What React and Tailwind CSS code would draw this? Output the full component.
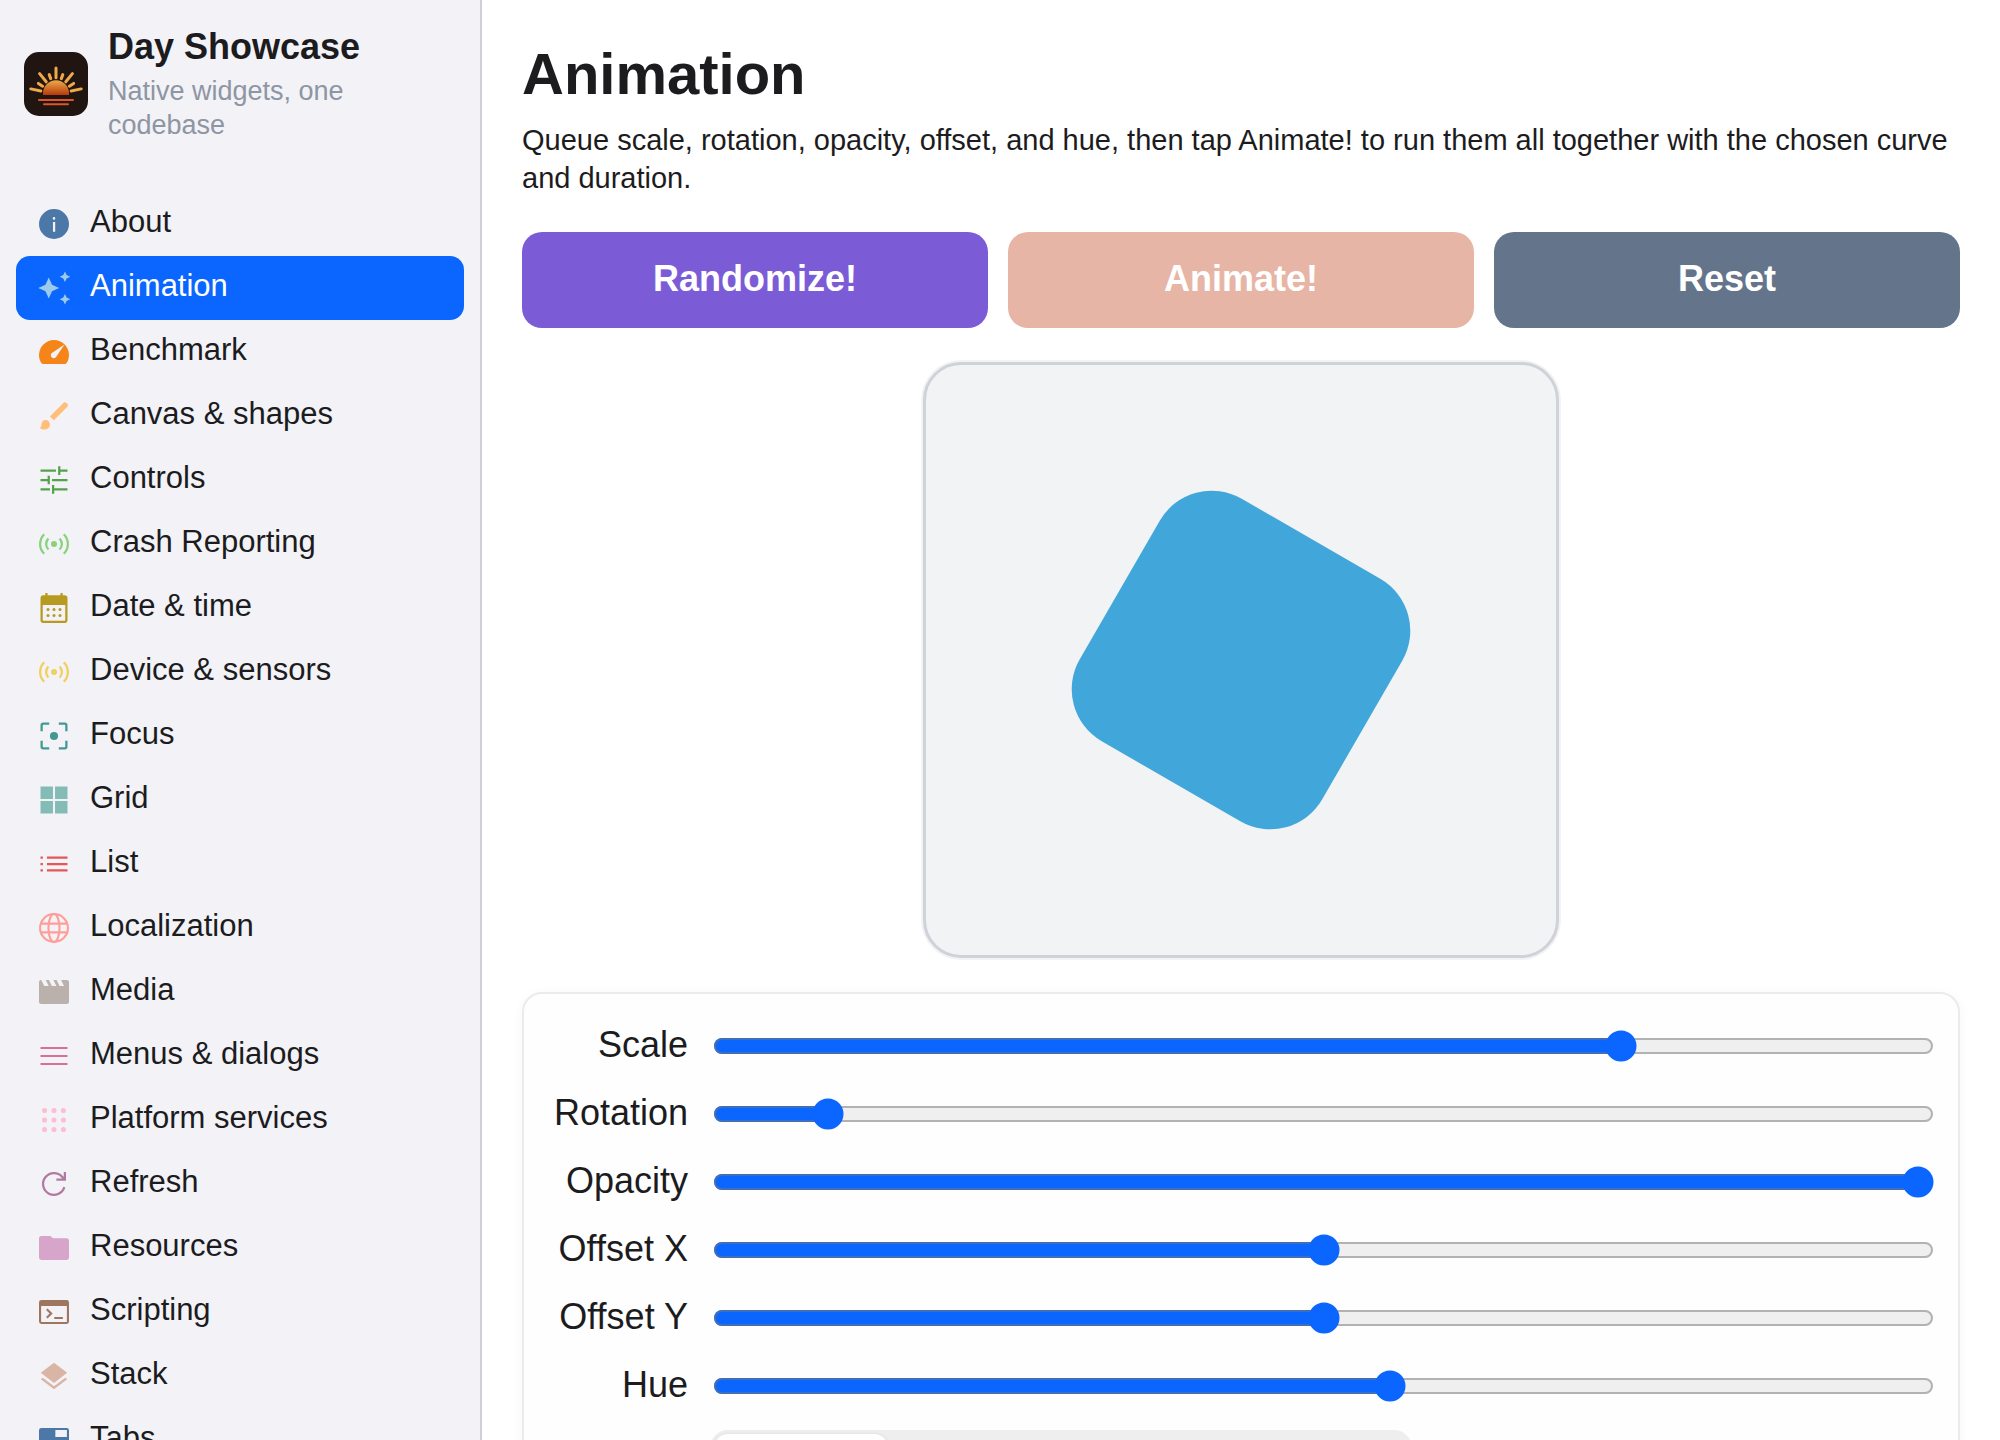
import { useState } from "react";

const Icon = ({ color, children }) => (
    <svg viewBox="0 0 24 24" className="size-9 shrink-0" fill={color} stroke="none" aria-hidden="true">
        {children}
    </svg>
);

const LineIcon = ({ color, width = 1.5, children }) => (
    <svg
        viewBox="0 0 24 24"
        className="size-9 shrink-0"
        fill="none"
        stroke={color}
        strokeWidth={width}
        aria-hidden="true"
    >
        {children}
    </svg>
);

const SensorsIcon = ({ color }) => (
    <LineIcon color={color}>
        <circle cx="12" cy="12" r="2" fill={color} stroke="none" />
        <path d="M8.29 8.29A5.25 5.25 0 0 0 8.29 15.71M15.71 8.29A5.25 5.25 0 0 1 15.71 15.71" />
        <path d="M5.46 5.46A9.25 9.25 0 0 0 5.46 18.54M18.54 5.46A9.25 9.25 0 0 1 18.54 18.54" />
    </LineIcon>
);

const menuItems = [
    {
        label: "About",
        icon: (
            <Icon color="#4c78a8">
                <path
                    fillRule="evenodd"
                    d="M12 2a10 10 0 1 0 0 20 10 10 0 0 0 0-20zM11.3 10.6h1.5v6.6h-1.5zM12 7.4a.85.85 0 1 1 0 1.7.85.85 0 0 1 0-1.7z"
                />
            </Icon>
        ),
    },
    {
        label: "Animation",
        icon: (
            <Icon color="#9ecae9">
                <path d="M8.5 5l2.2 4.8 4.8 2.2-4.8 2.2-2.2 4.8-2.2-4.8L1.5 12l4.8-2.2z" />
                <path d="M19.3 1l1.1 2.4 2.4 1.1-2.4 1.1-1.1 2.4-1.1-2.4-2.4-1.1 2.4-1.1z" />
                <path d="M19.3 16l1.1 2.4 2.4 1.1-2.4 1.1-1.1 2.4-1.1-2.4-2.4-1.1 2.4-1.1z" />
            </Icon>
        ),
    },
    {
        label: "Benchmark",
        icon: (
            <Icon color="#f58518">
                <path
                    fillRule="evenodd"
                    d="M5.1 20q-.55 0-1.012-.238t-.738-.712q-.65-1.175-1-2.437T2 14q0-2.075.788-3.9t2.137-3.175T8.1 4.788T12 4q2.05 0 3.85.775T19 6.888t2.15 3.125t.825 3.837q.025 1.375-.312 2.688t-1.038 2.512q-.275.475-.737.713T18.874 20zM10.45 15.5q.6.6 1.55.588t1.4-.688L19 7l-8.4 5.6q-.7.45-.725 1.375t.575 1.525z"
                />
            </Icon>
        ),
    },
    {
        label: "Canvas & shapes",
        icon: (
            <Icon color="#ffbf79">
                <path d="M9.3 12.4L18.2 3.4q.5-.5 1.1-.5.6 0 1 .4l.6.6q.4.4.4 1t-.4 1L11.9 14.9z" />
                <path d="M5.5 21c-1.1 0-2.4-.5-3.2-1.2.9-.1 1.3-.8 1.3-1.8 0-2 1.3-3.3 2.9-3.3s2.8 1.3 2.8 2.9C9.3 19.6 7.7 21 5.5 21z" />
            </Icon>
        ),
    },
    {
        label: "Controls",
        icon: (
            <LineIcon color="#54a24b">
                <path d="M3 5.75H13.3M15.5 2.9V8.7M15.5 5.75H21M3 12H8.5M8.5 9.1V14.8M10.7 12H21M3 18.25H9.3M11.4 15.3V21.1M11.4 18.25H21" />
            </LineIcon>
        ),
    },
    { label: "Crash Reporting", icon: <SensorsIcon color="#88d27a" /> },
    {
        label: "Date & time",
        icon: (
            <Icon color="#b79a20">
                <path
                    fillRule="evenodd"
                    d="M6.2 2h1.5v1.5h8.6V2h1.5v1.5h1.4q.75 0 1.3.5t.5 1.3v14.9q0 .75-.5 1.3t-1.3.5H4.8q-.75 0-1.3-.5T3 20.2V5.3q0-.75.5-1.3t1.3-.5h1.4zM4.5 10v10.2q0 .3.3.3h14.4q.3 0 .3-.3V10z"
                />
                <circle cx="8" cy="13" r="1" />
                <circle cx="12" cy="13" r="1" />
                <circle cx="16" cy="13" r="1" />
                <circle cx="8" cy="17" r="1" />
                <circle cx="12" cy="17" r="1" />
                <circle cx="16" cy="17" r="1" />
            </Icon>
        ),
    },
    { label: "Device & sensors", icon: <SensorsIcon color="#f2cf5b" /> },
    {
        label: "Focus",
        icon: (
            <LineIcon color="#439894">
                <circle cx="12" cy="12" r="2.7" fill="#439894" stroke="none" />
                <path d="M3.75 8.8V4.8q0-1.05 1.05-1.05h4M15.2 3.75h4q1.05 0 1.05 1.05v4M20.25 15.2v4q0 1.05-1.05 1.05h-4M8.8 20.25h-4q-1.05 0-1.05-1.05v-4" />
            </LineIcon>
        ),
    },
    {
        label: "Grid",
        icon: (
            <Icon color="#83bcb6">
                <path d="M3 3h8.3v8.3H3zM12.7 3H21v8.3h-8.3zM3 12.7h8.3V21H3zM12.7 12.7H21V21h-8.3z" />
            </Icon>
        ),
    },
    {
        label: "List",
        icon: (
            <LineIcon color="#e45756">
                <path d="M3 7.75h1.6M7.3 7.75H21M3 12h1.6M7.3 12H21M3 16.25h1.6M7.3 16.25H21" />
            </LineIcon>
        ),
    },
    {
        label: "Localization",
        icon: (
            <LineIcon color="#ff9d98" width={1.4}>
                <circle cx="12" cy="12" r="9.3" />
                <ellipse cx="12" cy="12" rx="3.7" ry="9.3" />
                <path d="M3.2 9.1h17.6M3.2 14.9h17.6" />
            </LineIcon>
        ),
    },
    {
        label: "Media",
        icon: (
            <Icon color="#bab0ac">
                <path d="M3.5 4l2 4h3l-2-4h2.1l2 4h3l-2-4h2.1l2 4h3l-2-4h3.8Q22 4 22 5.5v13q0 1.5-1.5 1.5h-17Q2 20 2 18.5v-13Q2 4 3.5 4z" />
            </Icon>
        ),
    },
    {
        label: "Menus & dialogs",
        icon: (
            <LineIcon color="#d67195" width={1.4}>
                <path d="M3 6.7h18M3 12h18M3 17.3h18" />
            </LineIcon>
        ),
    },
    {
        label: "Platform services",
        icon: (
            <Icon color="#fcbfd2">
                {[5.7, 12, 18.3].map((y) =>
                    [5.7, 12, 18.3].map((x) => <circle key={`${x}-${y}`} cx={x} cy={y} r="1.7" />)
                )}
            </Icon>
        ),
    },
    {
        label: "Refresh",
        icon: (
            <LineIcon color="#b279a2">
                <path d="M18.9 14.1A7.25 7.25 0 1 1 17.4 7.2L19 9M19.25 4V9.1H13.6" />
            </LineIcon>
        ),
    },
    {
        label: "Resources",
        icon: (
            <Icon color="#d6a5c9">
                <path d="M3.6 4h6l1.8 1.5h9q1.6 0 1.6 1.6v11.3q0 1.6-1.6 1.6H3.6Q2 20 2 18.4V5.6Q2 4 3.6 4z" />
            </Icon>
        ),
    },
    {
        label: "Scripting",
        icon: (
            <Icon color="#9e765f">
                <path
                    fillRule="evenodd"
                    d="M3.6 4h16.8Q22 4 22 5.6v12.8q0 1.6-1.6 1.6H3.6Q2 20 2 18.4V5.6Q2 4 3.6 4zM3.4 8v10.3q0 .3.3.3h16.6q.3 0 .3-.3V8z"
                />
                <path d="M6.7 10.6l1-1 3.4 3.4-3.4 3.4-1-1L9.1 13zM12.2 15.4h5.7v1.3h-5.7z" />
            </Icon>
        ),
    },
    {
        label: "Stack",
        icon: (
            <Icon color="#d8b5a5">
                <path d="M12 3.2l8.8 6.7-8.8 6.8-8.8-6.8zM3.2 14.1l1.3-1L12 18.9l7.5-5.8 1.3 1L12 20.8z" />
            </Icon>
        ),
    },
    {
        label: "Tabs",
        icon: (
            <Icon color="#4c78a8">
                <path
                    fillRule="evenodd"
                    d="M3.6 4h16.8Q22 4 22 5.6v12.8q0 1.6-1.6 1.6H3.6Q2 20 2 18.4V5.6Q2 4 3.6 4zM12.9 5.4V10h7.7V5.4z"
                />
            </Icon>
        ),
    },
];

const initial = { scale: 1.5, rotation: 30, opacity: 1, x: 0, y: 0, hue: 200 };

const sliders = [
    { id: "scale", label: "Scale", min: 0, max: 2, step: 0.01 },
    { id: "rotation", label: "Rotation", min: 0, max: 360, step: 1 },
    { id: "opacity", label: "Opacity", min: 0, max: 1, step: 0.01 },
    { id: "x", label: "Offset X", min: -100, max: 100, step: 1 },
    { id: "y", label: "Offset Y", min: -100, max: 100, step: 1 },
    { id: "hue", label: "Hue", min: 0, max: 360, step: 1 },
];

const curves = ["linear", "ease-in", "ease-out", "ease-in-out"];

const Logo = () => (
    <svg viewBox="0 0 64 64" className="size-16 shrink-0" aria-hidden="true">
        <defs>
            <linearGradient id="sun" x1="0" y1="0" x2="0" y2="1">
                <stop offset="0" stopColor="#efa94a" />
                <stop offset="1" stopColor="#b63a0c" />
            </linearGradient>
        </defs>
        <rect width="64" height="64" rx="15" fill="#211512" />
        <path d="M19 43v-1.7a13 13 0 0 1 26 0V43z" fill="url(#sun)" />
        <path
            d="M32 16v9.8M15.6 21.6l6.6 8.2M48.4 21.6l-6.6 8.2M25.2 22.6l1.5 4M38.8 22.6l-1.5 4M14.4 31.4l4.2 2.8M49.6 31.4l-4.2 2.8M6.8 36.9l10 2.1M57.2 36.9l-10 2.1"
            stroke="#efa94a"
            strokeWidth="3"
            strokeLinecap="round"
        />
        <path d="M15 48h34M20 52.3h24" stroke="#dc5629" strokeWidth="2.1" strokeLinecap="round" />
    </svg>
);

const Sidebar = ({ active, onSelect }) => (
    <aside className="w-[482px] shrink-0 overflow-hidden border-r-2 border-[#cfcfd6] bg-[#f2f2f7]">
        <div className="flex items-center gap-5 px-6 pt-[26px] pb-[50px]">
            <Logo />
            <div className="flex flex-col gap-[7px]">
                <h2 className="text-[36px] leading-[41px] font-bold">Day Showcase</h2>
                <p className="text-[27px] leading-[34px] text-[#8e95a3]">Native widgets, one codebase</p>
            </div>
        </div>
        <nav className="px-4">
            {menuItems.map((item) => (
                <a
                    key={item.label}
                    href="#"
                    onClick={() => onSelect(item.label)}
                    className={`flex h-16 items-center gap-[18px] rounded-[14px] px-5 ${active === item.label ? "bg-[#0a66ff] text-white" : ""
                        }`}
                >
                    {item.icon}
                    <span className="pb-[5px] text-[31px] leading-9">{item.label}</span>
                </a>
            ))}
        </nav>
    </aside>
);

const App = () => {
    const [active, setActive] = useState("Animation");
    const [values, setValues] = useState(initial);
    const [curve, setCurve] = useState("linear");

    const randomize = () => {
        const next = {};
        sliders.forEach((s) => {
            next[s.id] = s.min + Math.random() * (s.max - s.min);
        });
        setValues(next);
    };

    const buttonClass = "h-24 rounded-[20px] pb-[3px] text-[36px] font-bold text-white";

    return (
        <div className="flex h-screen overflow-hidden bg-white font-['Liberation_Sans',Arial,sans-serif] text-[#1c1c1e]">
            <Sidebar active={active} onSelect={setActive} />

            <main className="flex min-w-0 flex-1 flex-col gap-8 overflow-hidden px-10 pt-10">
                <header className="flex flex-col gap-[13px]">
                    <h1 className="text-[58px] leading-[68px] font-bold">Animation</h1>
                    <p className="pb-[3px] text-[29px] leading-[38px]">
                        Queue scale, rotation, opacity, offset, and hue, then tap Animate! to run them all together
                        with the chosen curve and duration.
                    </p>
                </header>

                <div className="grid shrink-0 grid-cols-3 gap-5">
                    <button className={`${buttonClass} bg-[#7c5cd6]`} onClick={randomize}>
                        Randomize!
                    </button>
                    <button className={`${buttonClass} bg-[#e7b5a5]`} disabled>
                        Animate!
                    </button>
                    <button className={`${buttonClass} bg-[#64748b]`} onClick={() => setValues(initial)}>
                        Reset
                    </button>
                </div>

                {/* Preview stage */}
                <div className="h-[600px] w-[640px] shrink-0 self-center rounded-[40px] bg-[#f1f3f5] p-0.5">
                    <div className="flex h-full items-center justify-center rounded-[38px] border-3 border-[#d1d1d9]">
                        <div
                            className="size-[280px] rounded-[60px]"
                            style={{
                                backgroundColor: `hsl(${values.hue} 67% 55.5%)`,
                                opacity: values.opacity,
                                transform: `translate(${values.x}px, ${values.y}px) rotate(${values.rotation}deg) scale(${values.scale / 1.5})`,
                            }}
                        />
                    </div>
                </div>

                {/* Parameters */}
                <section className="flex shrink-0 flex-col gap-5 rounded-[20px] border-2 border-[#ebebeb] bg-[#fefefe] pt-7 pr-6 pb-7 pl-[26px] shadow-[0_2px_12px_rgba(0,0,0,0.04)]">
                    {sliders.map((s) => (
                        <div key={s.id} className="flex h-12 items-center gap-[25px]">
                            <label htmlFor={s.id} className="w-[138px] shrink-0 pb-[3px] text-right text-[36px] leading-10">
                                {s.label}
                            </label>
                            <input
                                id={s.id}
                                type="range"
                                min={s.min}
                                max={s.max}
                                step={s.step}
                                value={values[s.id]}
                                onChange={(e) => setValues({ ...values, [s.id]: Number(e.target.value) })}
                                className="min-w-0 flex-1 accent-[#0a66ff] [zoom:2]"
                            />
                        </div>
                    ))}
                    <div className="ml-40 flex w-[702px] rounded-[18px] bg-[#eeeeee] p-1">
                        {curves.map((c) => (
                            <button
                                key={c}
                                aria-label={c}
                                onClick={() => setCurve(c)}
                                className={`h-14 flex-1 rounded-[14px] ${curve === c ? "bg-white shadow-[0_1px_4px_rgba(0,0,0,0.12)]" : ""}`}
                            />
                        ))}
                    </div>
                </section>
            </main>
        </div>
    );
};

export default App;
